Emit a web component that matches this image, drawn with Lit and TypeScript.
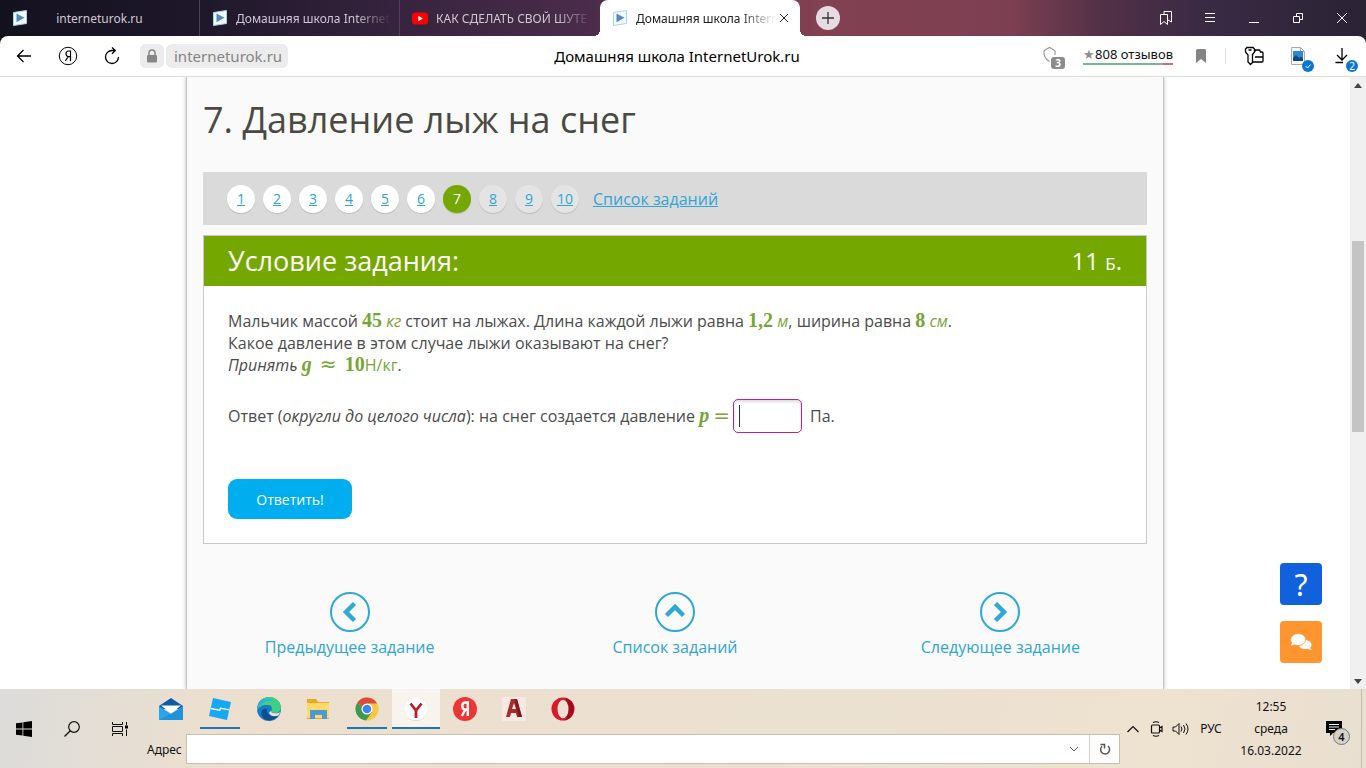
import { LitElement, html, css, svg } from "lit";
import { customElement, state } from "lit/decorators.js";
import { classMap } from "lit/directives/class-map.js";

const ruLogo = html`<svg class="fav" width="16" height="16" viewBox="0 0 16 16" aria-hidden="true">
  <path d="M1.500 2.500 14.500 .5v13L1.500 15.500z" fill="#f2fbff" stroke="#a9d3ea" />
  <path d="M4.500 3.500 12.500 7.700 4.500 12.300z" fill="#5588b8" stroke="none" />
</svg>`;

const tubeLogo = html`<svg class="fav" width="16" height="16" viewBox="0 0 16 16" aria-hidden="true">
  <rect y="2.500" width="16" height="12" rx="3.500" fill="#f00" stroke="none" />
  <path d="M6.300 5.800 10.800 8.500l-4.500 2.700z" fill="#fff" stroke="none" />
</svg>`;

@customElement("browser-bar")
export class BrowserBar extends LitElement {
  static styles = css`
    :host {
      display: block;
      font-family: "Noto Sans", "Open Sans", sans-serif;
      background: linear-gradient(90deg, #14111f 0%, #1d1729 14%, #38243f 30%, #4a2c4a 43%, #834152 60%, #7c3f51 74%, #503046 81%, #3a2a44 88%, #2a2334 100%);
    }
    .tabs { display: flex; height: 36px; align-items: stretch; padding-right: 2px; }
    .tab {
      box-sizing: border-box;
      width: 200px;
      display: flex;
      align-items: center;
      gap: 8px;
      padding: 0 8px 0 12px;
      color: #cfc8d2;
      font-size: 12px;
      border-right: 1px solid #4d4254;
      white-space: nowrap;
    }
    .fav { flex: none; display: block; }
    .name {
      flex: 1;
      overflow: hidden;
      mask-image: linear-gradient(90deg, #000 calc(100% - 36px), transparent);
    }
    .pinned { padding-right: 36px; text-align: center; }
    .pinned .name { mask-image: none; }
    .last { border-right: 0; }
    .active {
      position: relative;
      background: #fff;
      color: #222;
      border: 0;
      border-radius: 8px 8px 0 0;
      padding-right: 6px;
    }
    .active::before, .active::after {
      content: "";
      position: absolute;
      bottom: 0;
      width: 6px;
      height: 6px;
    }
    .active::before { left: -6px; background: radial-gradient(circle at 0 0, transparent 6px, #fff 6px); }
    .active::after { right: -6px; background: radial-gradient(circle at 100% 0, transparent 6px, #fff 6px); }
    button { border: 0; padding: 0; background: none; color: inherit; display: grid; place-items: center; font: inherit; }
    svg { display: block; fill: none; stroke: currentColor; }
    .shut { width: 20px; height: 24px; margin-left: -10px; }
    .plus { width: 24px; height: 24px; border-radius: 50%; background: #e6dbe0; color: #333; align-self: center; margin: 0 auto 0 16px; }
    .win { width: 44px; color: #fff; }
    .bar {
      display: grid;
      grid-template-columns: 1fr auto 1fr;
      align-items: center;
      height: 40px;
      background: #fff;
      border-bottom: 1px solid #dcdfdf;
      border-radius: 8px 8px 0 0;
      font-size: 15px;
      color: #000;
    }
    .left, .right { display: flex; align-items: center; }
    .tool { width: 44px; height: 36px; }
    .left { padding-left: 2px; }
    .lock { width: 24px; height: 24px; background: #ececec; border-radius: 6px; margin-left: 6px; color: #868686; }
    .url { height: 24px; line-height: 24px; padding: 0 6px 0 8px; margin-left: 2px; border-radius: 6px; background: #ececec; color: #858585; }
    .title { padding-right: 12px; }
    .right { justify-content: flex-end; padding-right: 2px; }
    .badged { position: relative; }
    .grey { position: absolute; right: 8px; bottom: 5px; width: 14px; line-height: 12px; border-radius: 3px; background: #8c8c8c; color: #fff; font-size: 10px; font-weight: 700; }
    .blue { position: absolute; right: 6px; bottom: 2px; width: 12px; height: 12px; line-height: 12px; border-radius: 50%; background: #0b76d0; color: #fff; font-size: 10px; display: grid; place-items: center; }
    .reviews {
      display: block; color: #111; text-decoration: none; font-size: 13px; line-height: 18px; white-space: nowrap;
      border-bottom: 2px solid; border-image: linear-gradient(90deg, #75b98f 88%, #dc6a64 88%) 1;
      margin: 0 6px 2px 10px;
    }
    .star { color: #8d8d8d; }
    .sep { width: 1px; height: 16px; background: #ddd; margin: 0 6px 0 2px; }
  `;

  render() {
    return html`
      <div class="tabs" role="tablist">
        <div class="tab pinned" role="tab">${ruLogo}<span class="name">interneturok.ru</span></div>
        <div class="tab" role="tab">${ruLogo}<span class="name">Домашняя школа Internet</span></div>
        <div class="tab last" role="tab">${tubeLogo}<span class="name">КАК СДЕЛАТЬ СВОЙ ШУТЕ</span></div>
        <div class="tab active" role="tab" aria-selected="true">
          ${ruLogo}<span class="name">Домашняя школа Intern</span>
          <button class="shut" aria-label="Закрыть вкладку"><svg width="8" height="8" viewBox="0 0 8 8"><path d="M0 0l8 8M8 0 0 8" /></svg></button>
        </div>
        <button class="plus" aria-label="Новая вкладка"><svg width="12" height="12" viewBox="0 0 12 12"><path d="M6 0v12M0 6h12" stroke-width="1.300" /></svg></button>
        <button class="win" aria-label="Закладки"><svg width="14" height="16" viewBox="0 0 14 16"><path d="M1.500 4.500h7v10L5 11.500l-3.500 3zM5 4V1.500h7.500v10.500L9 10" /></svg></button>
        <button class="win" aria-label="Меню"><svg width="12" height="12" viewBox="0 0 12 12"><path d="M1 1.500h10M1 5.500h10M1 9.500h10" /></svg></button>
        <button class="win" aria-label="Свернуть"><svg width="12" height="12" viewBox="0 0 12 12"><path d="M1 10.500h10" /></svg></button>
        <button class="win" aria-label="Развернуть"><svg width="12" height="12" viewBox="0 0 12 12"><path d="M1.500 4.500h6v6h-6zM4.500 4V1.500h6v6H8" /></svg></button>
        <button class="win" aria-label="Закрыть"><svg width="12" height="12" viewBox="0 0 12 12"><path d="M1 1l10 10M11 1 1 11" /></svg></button>
      </div>
      <div class="bar">
        <div class="left">
          <button class="tool" aria-label="Назад"><svg width="16" height="16" viewBox="0 0 16 16"><path d="M15 8H1.500M7.500 2l-6 6 6 6" stroke-width="1.300" /></svg></button>
          <button class="tool" aria-label="Яндекс"><svg width="20" height="20" viewBox="0 0 20 20"><circle cx="10" cy="10" r="8.700" /><path d="M12.500 15V5h-1.800C8.800 5 8 6.300 8 7.800s.9 2.800 2.700 2.800h1.800M10.300 10.600 7.300 15" stroke-width="1.200" /></svg></button>
          <button class="tool" aria-label="Обновить"><svg width="16" height="18" viewBox="0 0 16 18"><path d="M14.500 10A6.500 6.500 0 1 1 8 3.500h3M8 .5l3.300 3L8 6.800" stroke-width="1.300" /></svg></button>
          <button class="lock" aria-label="Защищено"><svg width="12" height="14" viewBox="0 0 12 14"><rect x="1" y="6" width="10" height="7.500" rx="1" fill="currentColor" stroke="none" /><path d="M3 6V4a3 3 0 0 1 6 0v2" stroke-width="1.500" /></svg></button>
          <span class="url">interneturok.ru</span>
        </div>
        <span class="title">Домашняя школа InternetUrok.ru</span>
        <div class="right">
          <button class="tool badged" aria-label="Защита"><svg width="20" height="20" viewBox="0 0 20 20"><path d="M8.500 15.500C3.500 12.500 2.500 9 3 5L4.500 3.800 8.500 1.500l4 2.300L14 5v4" stroke="#999" stroke-width="1.200" /></svg><span class="grey">3</span></button>
          <a class="reviews" href="#"><span class="star">★</span>808 отзывов</a>
          <button class="tool" aria-label="В закладки"><svg width="10" height="14" viewBox="0 0 10 14"><path d="M0 1.500Q0 0 1.500 0h7Q10 0 10 1.500V14L5 10l-5 4z" fill="#858585" stroke="none" /></svg></button>
          <span class="sep"></span>
          <button class="tool" aria-label="Пароли"><svg width="20" height="20" viewBox="0 0 20 20"><path d="M3 1.500h6L10.500 3v3L8.500 8.500v8L6.500 18.500 4 16V9L1.500 6V3zM4.500 4h3M10.500 6l1-2h4l1 2h1.500q1 0 1 1v8q0 1-1 1H9M11 11h8" stroke-width="1.300" /></svg></button>
          <button class="tool badged" aria-label="Снимок"><svg width="16" height="18" viewBox="0 0 16 18"><path d="M1.500.5h9l4 4v13h-13zM10.500.5v4h4" fill="#f6f6f6" stroke="#aaa" /><path d="M3 4h10v10H3z" fill="#2d8ad2" stroke="none" /><path d="M3 11l3-3 3 3 2-1.500 2 2V14H3z" fill="#12467c" stroke="none" /></svg><span class="blue"><svg width="8" height="8" viewBox="0 0 8 8"><path d="M1.500 4l2 2 3-3.500" /></svg></span></button>
          <button class="tool badged" aria-label="Загрузки"><svg width="16" height="18" viewBox="0 0 16 18"><path d="M8 1v12M3 8l5 5 5-5M1.500 15.500H9" stroke-width="1.300" /></svg><span class="blue">2</span></button>
        </div>
      </div>`;
  }
}

@customElement("lesson-page")
export class LessonPage extends LitElement {
  static styles = css`
    :host {
      display: flex;
      flex: 1;
      min-height: 0;
      background: #fff;
      font-family: "Open Sans", "Noto Sans", sans-serif;
      font-size: 16px;
      line-height: 22px;
      color: #4b4b4b;
    }
    .view { flex: 1; min-width: 0; overflow: hidden; position: relative; }
    .sheet {
      box-sizing: border-box;
      max-width: 978px;
      min-height: 100%;
      margin: 0 auto;
      background: #fafafa;
      border: 1px solid #c4c4c4;
      border-width: 0 1px;
      box-shadow: 0 0 4px #bbb;
      padding-top: 18px;
    }
    .inner { padding: 0 16px; }
    h1 { margin: 0 0 28px; font-size: 36px; line-height: 49px; font-weight: 400; color: #4a4a42; }
    a { color: #2fa5d3; }
    .steps { display: flex; align-items: center; gap: 8px; min-height: 53px; padding: 0 24px; background: #dadada; margin-bottom: 10px; }
    .step { width: 28px; height: 28px; line-height: 28px; border-radius: 50%; background: #fff; text-align: center; font-size: 14px; box-shadow: 0 1px 1px #bbb; }
    .now { background: #74a800; color: #fff; text-decoration: none; }
    .later { background: #e4e4e4; }
    .all { margin-left: 6px; }
    .card { background: #fff; border: 1px solid #c8c8c8; }
    .head { display: flex; justify-content: space-between; align-items: center; height: 50px; padding: 0 24px; background: #74a800; color: #fff; }
    h2 { margin: 0; font-size: 27px; font-weight: 400; }
    .points { font-size: 24px; font-variant: small-caps; }
    .body { padding: 24px; }
    p { margin: 0; }
    .m { color: #76a536; }
    .n { color: #76a536; font: bold 20px/20px "Liberation Serif", serif; }
    .v { font-style: italic; }
    .op { color: #76a536; font: 20px/20px "DejaVu Sans", sans-serif; padding: 0 4px; }
    .eq { padding: 0; }
    .answer { display: flex; align-items: center; margin-top: 23px; min-height: 34px; white-space: pre; }
    .field {
      box-sizing: border-box; width: 69px; height: 34px; margin: 0 8px 0 3px; border: 1px solid #b4278c; border-radius: 5px;
      background: linear-gradient(#333, #333) 5px 5px / 1px 22px no-repeat #fff;
      box-shadow: inset 0 2px 3px #ddd; outline: 0; font: inherit; padding: 0 6px;
    }
    .send { display: block; margin-top: 46px; width: 124px; height: 40px; border: 0; border-radius: 9px; background: #00adee; color: #fff; font: 14px "Open Sans", sans-serif; }
    .moves { display: grid; grid-template-columns: repeat(3, 1fr); margin-top: 48px; }
    .move { display: flex; flex-direction: column; align-items: center; gap: 4px; text-decoration: none; }
    .move svg { fill: none; stroke: #2fa8d6; }
    .helpers { position: absolute; right: 28px; bottom: 26px; display: grid; gap: 16px; }
    .help { width: 42px; height: 42px; border: 0; border-radius: 4px; padding: 0; display: grid; place-items: center; color: #fff; background: #1161dc; font: 30px "Noto Sans", sans-serif; }
    .chat { background: #ff9530; }
    .scroll { width: 16px; background: #f0f0f0; display: flex; flex-direction: column; align-items: center; }
    .scroll svg { flex: none; }
    .before { flex: 148; }
    .thumb { flex: 190; width: 12px; background: #c4c4c4; }
    .after { flex: 241; }
  `;

  private steps = Array.from({ length: 10 }, (_, i) => i + 1);
  private current = 7;

  private arrow(d: string, label: string) {
    return html`<a class="move" href="#"><svg width="40" height="40" viewBox="0 0 40 40" aria-hidden="true"><circle cx="20" cy="20" r="19" stroke-width="2" /><path d=${d} stroke-width="4.500" /></svg><span>${label}</span></a>`;
  }

  render() {
    return html`
      <main class="view">
        <div class="sheet">
          <div class="inner">
            <h1>7. Давление лыж на снег</h1>
            <nav class="steps">
              ${this.steps.map(
                (n) => html`<a href="#" class=${classMap({ step: true, now: n === this.current, later: n > this.current })}>${n}</a>`
              )}
              <a class="all" href="#">Список заданий</a>
            </nav>
            <section class="card">
              <div class="head"><h2>Условие задания:</h2><span class="points">11 б.</span></div>
              <div class="body">
                <p>Мальчик массой <span class="n">45</span> <i class="m">кг</i> стоит на лыжах. Длина каждой лыжи равна <span class="n">1,2</span> <i class="m">м</i>, ширина равна <span class="n">8</span> <i class="m">см</i>.</p>
                <p>Какое давление в этом случае лыжи оказывают на снег?</p>
                <p><i>Принять</i> <span class="n v">g</span> <span class="op">≈</span> <span class="n">10</span><span class="m">Н/кг</span>.</p>
                <div class="answer"><label for="answer">Ответ (<i>округли до целого числа</i>): на снег создается давление <span class="n v">p</span> <span class="op eq">=</span></label><input id="answer" class="field" type="text" /><span>Па.</span></div>
                <button class="send">Ответить!</button>
              </div>
            </section>
          </div>
          <nav class="moves">
            ${this.arrow("M24.500 11.500 16 20l8.500 8.500", "Предыдущее задание")}
            ${this.arrow("M11.500 23.500 20 15l8.500 8.500", "Список заданий")}
            ${this.arrow("M15.500 11.500 24 20l-8.500 8.500", "Следующее задание")}
          </nav>
        </div>
        <div class="helpers">
          <button class="help">?</button>
          <button class="help chat" aria-label="Чат"><svg width="22" height="18" viewBox="0 0 22 18"><path d="M13 7.500c5-1 8.500 1.200 8.500 4.300 0 1.200-.5 2-1.200 2.800.2 1 .8 1.800 1.200 2.400-1.600 0-2.800-.5-3.700-1.200-4 .9-8-.3-8.800-3z" fill="#fff" /><ellipse cx="8.200" cy="6.500" rx="7.600" ry="6" fill="#fff" stroke="#ff9530" stroke-width=".8" /><path d="M2 8.500c.2 2-.8 3-1.500 4 2 0 3.700-.6 5-1.500z" fill="#fff" /></svg></button>
        </div>
      </main>
      <div class="scroll">
        <svg width="16" height="16" viewBox="0 0 16 16"><path d="M4 11l4-5 4 5z" fill="#444" /></svg>
        <div class="before"></div><div class="thumb"></div><div class="after"></div>
        <svg width="16" height="16" viewBox="0 0 16 16"><path d="M4 6l4 5 4-5z" fill="#444" /></svg>
      </div>`;
  }
}

const apps = [
  { name: "Почта", open: false, art: svg`<path d="M0 9 12 1l12 8v3H0z" fill="#0f5aa6"/><path d="M0 9l12 8L24 9v14H0z" fill="#2aa5e8"/><path d="M0 23 24 10v13z" fill="#1c87d4" fill-opacity=".6"/><path d="M2 8.500h20l-10 8z" fill="#fff"/>` },
  { name: "Roblox Studio", open: true, art: svg`<path d="M5 1l18 4-4 18L1 19z" fill="#14a9f2"/><path d="M2.800 11.500l9 1.700.6-2 9 1.600" fill="none" stroke="#fff" stroke-width="1.300"/>` },
  { name: "Edge", open: false, art: svg`<circle cx="12" cy="12" r="12" fill="#167bc6"/><path d="M1 9C3 3 8 0 12 0c7 0 12 5 12 10.500 0 3.500-3 5.500-6 5.500s-4-1.200-3.500-2.500c1-2 .5-5.500-3.500-5.500-5-.5-9 1-11 6 0-2 .3-3.500 1-5z" fill="#3fcf80"/><path d="M1 9C4 1 14-1 17 5c-5-3-12-1-17 8 0-2 .4-3 1-4z" fill="#29b8dc"/><path d="M10 12c-1 5 4 9 12 6-5 7-14 7-17 1-2-5 1-8 5-7z" fill="#0f4e93"/><path d="M14.500 13.500c-1 1.500.5 3 4 2.800 2 0 3.500-.6 4.500-1.300-.3 1.500-1 2.800-1.500 3.500-5 2-9 0-9.500-3z" fill="#ece1d2"/>` },
  { name: "Проводник", open: false, art: svg`<path d="M1 2h9l2 3h11v17H1z" fill="#e8a926"/><path d="M1 6h22v15H1z" fill="#ffda6b"/><path d="M4 13h17v9h-5v-4H9v4H4z" fill="#4a9ad4"/>` },
  { name: "Chrome", open: true, art: svg`<circle cx="12" cy="12" r="11.500" fill="#fbc63b"/><path d="M12 12 2 6.300A11.500 11.500 0 0 1 22 6.500H12z" fill="#d94b3c"/><path d="M12 12 2 6.300A11.500 11.500 0 0 0 11 23.500l6-8.500z" fill="#3b9a56"/><circle cx="12" cy="12" r="5.500" fill="#fff"/><circle cx="12" cy="12" r="4.300" fill="#4084ef"/>` },
  { name: "Яндекс Браузер", open: true, active: true, art: svg`<circle cx="12" cy="13" r="11" fill="#d4d4d4"/><circle cx="12" cy="12" r="11.300" fill="#fff"/><path d="M6.500 6.500 12 13.500l5.500-7M12 13v8" fill="none" stroke="#b91f25" stroke-width="2.800"/>` },
  { name: "Яндекс", open: false, art: svg`<circle cx="12" cy="12" r="12" fill="#ee3434"/><path d="M14.800 19V5.500h-2c-2.600 0-3.600 1.600-3.600 3.500s1.200 3.700 3.600 3.700h2M12.500 12.700 8.800 19" fill="none" stroke="#fff" stroke-width="2.400"/>` },
  { name: "AutoCAD", open: false, art: svg`<path d="M0 0h24v24H0z" fill="#f8e8e2"/><path d="M9 2h6l5 18h-5l-1-4H9l-1 4H4zM12 6l-2 6h4z" fill="#a92b2e" fill-rule="evenodd"/><path d="M12.500 2H15l5 18h-4z" fill="#7f1b20"/>` },
  { name: "Opera", open: false, art: svg`<ellipse cx="12" cy="12" rx="11.500" ry="11.500" fill="#d8182b"/><path d="M14 .8a11.500 11.500 0 0 1 0 22.400c4-4 4-18 0-22.400z" fill="#9d0d1c"/><ellipse cx="12" cy="12" rx="5.500" ry="9.300" fill="#ece1d2"/>` },
];

@customElement("task-bar")
export class TaskBar extends LitElement {
  static styles = css`
    :host {
      display: flex;
      min-height: 79px;
      color: #111;
      font-family: "Noto Sans", "Open Sans", sans-serif;
      font-size: 12px;
      background: linear-gradient(100deg, #dcdcda 0%, #ecdfcf 16%, #ebe1d1 60%, #eee2d0 85%, #e9dfd0 100%);
    }
    button { border: 0; padding: 0; background: none; color: inherit; display: grid; place-items: center; font: inherit; }
    svg { display: block; fill: none; stroke: currentColor; }
    .sys { display: flex; padding-right: 3px; }
    .sys button { width: 48px; }
    .mid { flex: 1; min-width: 0; display: flex; flex-direction: column; }
    .apps { display: flex; gap: 1px; height: 45px; }
    .app { width: 48px; height: 40px; box-sizing: border-box; }
    .app svg { stroke: none; }
    .open { background: linear-gradient(#1f76ae, #1f76ae) center bottom / 40px 2px no-repeat; }
    .active { background: linear-gradient(#1f76ae, #1f76ae) center bottom / 48px 2px no-repeat #f8f4ed; }
    .address { display: flex; align-items: center; gap: 4px; }
    .box { flex: 1; display: flex; box-sizing: border-box; height: 30px; border: 1px solid #c9bfae; background: #fff; }
    .line { flex: 1; min-width: 0; border: 0; outline: 0; background: none; font: inherit; }
    .box button { width: 30px; color: #555; }
    .again { border-left: 1px solid #d5d0c8; }
    .tray { display: flex; align-items: center; padding-left: 1px; }
    .tray button { width: 24px; height: 40px; }
    .tray .lang { width: 36px; }
    .clock { width: 84px; display: grid; line-height: 22px; text-align: center; }
    .tray .note { width: 42px; position: relative; }
    .count { position: absolute; right: 5px; bottom: 4px; width: 15px; height: 15px; line-height: 15px; border: 1px solid #777; border-radius: 50%; background: #d5d0c8; font-size: 11px; font-weight: 600; }
    .edge { align-self: stretch; width: 1px; background: #c6bfb2; margin: 0 4px 0 6px; }
  `;

  @state() private address = "";

  render() {
    return html`
      <div class="sys">
        <button aria-label="Пуск"><svg width="16" height="16" viewBox="0 0 16 16"><path d="M0 2.300 6.500 1.400v6.200H0zM7.300 1.300 16 0v7.600H7.300zM0 8.400h6.500v6.200L0 13.700zM7.300 8.400H16V16l-8.700-1.300z" fill="#000" stroke="none" /></svg></button>
        <button aria-label="Поиск"><svg width="16" height="16" viewBox="0 0 16 16"><circle cx="10" cy="6" r="5.300" stroke-width="1.200" /><path d="M6.300 9.700.5 15.500" stroke-width="1.300" /></svg></button>
        <button aria-label="Представление задач"><svg width="18" height="16" viewBox="0 0 18 16"><path d="M1.500 1v2.500h10V1M1.500 15v-2.500h10V15M1.500 5.500h10v5h-10zM15.500 1v3M15.500 8.500V15" /><path d="M14 4.500h3v3h-3z" fill="#000" stroke="none" /></svg></button>
      </div>
      <div class="mid">
        <div class="apps">
          ${apps.map((a) => html`<button class=${classMap({ app: true, open: a.open, active: !!a.active })} aria-label=${a.name}><svg width="24" height="24" viewBox="0 0 24 24">${a.art}</svg></button>`)}
        </div>
        <div class="address">
          <label for="address">Адрес</label>
          <div class="box">
            <input id="address" class="line" type="text" .value=${this.address} @input=${(e: Event) => (this.address = (e.target as HTMLInputElement).value)} />
            <button aria-label="Показать список"><svg width="10" height="6" viewBox="0 0 10 6"><path d="M1 1l4 4 4-4" /></svg></button>
            <button class="again" aria-label="Перейти"><svg width="12" height="12" viewBox="0 0 12 12"><path d="M9 3A4.500 4.500 0 1 1 3 3.200M1.500 1.500H5.500V5.500" stroke-width="1.500" /></svg></button>
          </div>
        </div>
      </div>
      <div class="tray">
        <button aria-label="Скрытые значки"><svg width="12" height="8" viewBox="0 0 12 8"><path d="M.5 7 6 1.500 11.500 7" stroke-width="1.200" /></svg></button>
        <button aria-label="Камера"><svg width="14" height="16" viewBox="0 0 14 16"><path d="M2.500 4h6q1 0 1 1v6q0 1-1 1h-6q-1 0-1-1V5q0-1 1-1zM9.500 7l2.500-1.500v5L9.500 9M3 1.500q3-1.500 6 0M3 14.500q3 1.500 6 0" stroke-width="1.200" /></svg></button>
        <button aria-label="Громкость"><svg width="18" height="14" viewBox="0 0 18 14"><path d="M1 5h2.500L7 1.500v11L3.500 9H1zM9 4.500q1.800 2.500 0 5M11.500 3q3 4 0 8M14 1.500q4 5.500 0 11" /></svg></button>
        <button class="lang">РУС</button>
        <div class="clock"><span>12:55</span><span>среда</span><span>16.03.2022</span></div>
        <button class="note" aria-label="Уведомления"><svg width="16" height="16" viewBox="0 0 16 16"><path d="M0 0h16v12H7l-3 3v-3H0z" fill="#000" stroke="none" /><path d="M3 3.500h10M3 6h10M3 8.500h6" stroke="#eee" /></svg><span class="count">4</span></button>
        <span class="edge"></span>
      </div>`;
  }
}

@customElement("app-root")
export class AppRoot extends LitElement {
  static styles = css`
    :host { display: flex; flex-direction: column; height: 100vh; overflow: hidden; }
  `;

  render() {
    return html`<browser-bar></browser-bar><lesson-page></lesson-page><task-bar></task-bar>`;
  }
}
